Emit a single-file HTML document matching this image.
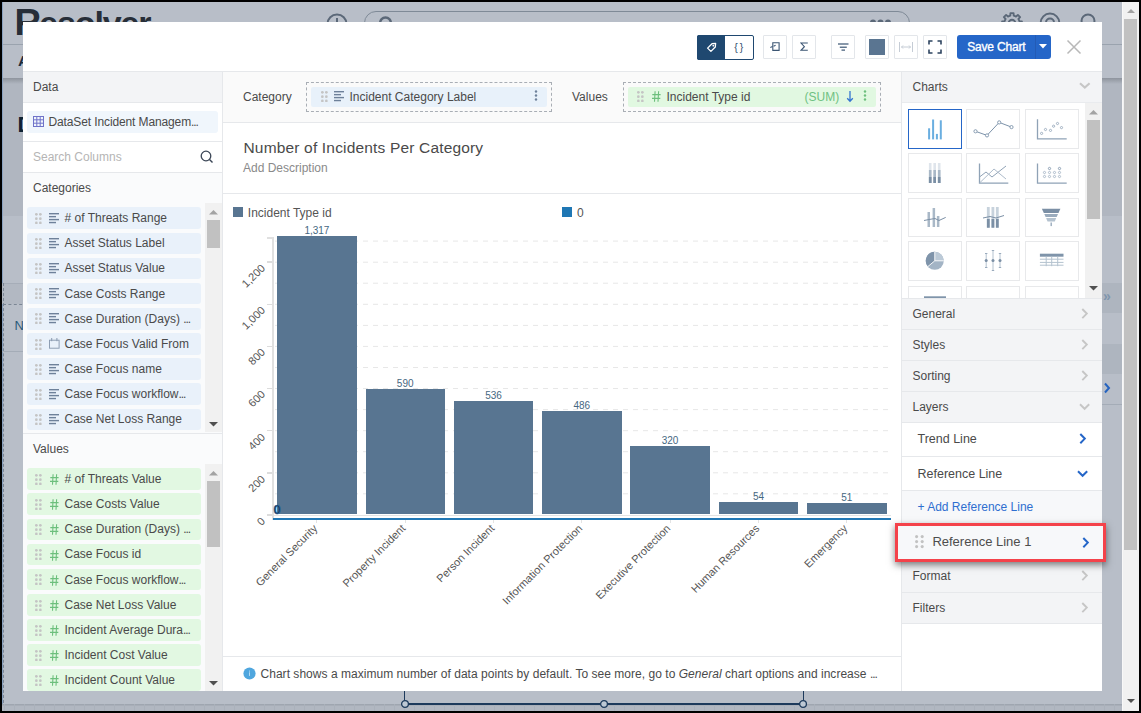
<!DOCTYPE html>
<html><head><meta charset="utf-8">
<style>
*{box-sizing:border-box;margin:0;padding:0}
html,body{width:1141px;height:713px;overflow:hidden;background:#000}
body{position:relative;font-family:"Liberation Sans",sans-serif;color:#444}
.abs{position:absolute}
#app{position:absolute;left:2px;top:2px;width:1120px;height:709px;background:#b8bec8;overflow:hidden}
#vscroll{position:absolute;left:1122px;top:2px;width:17px;height:709px;background:#f1f1f1;border-left:1px solid #f8f8f8}
#modal{position:absolute;left:23px;top:22px;width:1079px;height:669px;background:#fff;overflow:hidden}
.t{position:absolute;white-space:nowrap;font-size:12px;line-height:14px}
</style></head>
<body>
<div id="app">
<div class="abs" style="left:0.0px;top:76.0px;width:1120.0px;height:138.0px;background:#b0b6c0"></div>
<div class="abs" style="left:0.0px;top:76.0px;width:1120.0px;height:6.0px;background:linear-gradient(#8e949d,#b0b6c0)"></div>
<div class="abs" style="left:0.0px;top:0.0px;width:1120.0px;height:76.0px;background:#b8bec8"></div>
<div class="abs" style="left:0.0px;top:42.0px;width:1120.0px;height:1.0px;background:#9aa3ae"></div>
<div class="abs" style="left:0.0px;top:0.0px;width:1.0px;height:709.0px;background:#8aa2c0"></div>
<div class="abs" style="left:12.6px;top:-1px;font-size:37px;font-weight:bold;color:#272e38;letter-spacing:-2px;line-height:44px;white-space:nowrap">R<span style="font-size:34px;letter-spacing:-1.15px">esolver</span></div>
<div class="t" style="left:16.0px;top:51.9px;font-size:15.5px;color:#1c2b3d;font-weight:bold">A</div>
<div class="t" style="left:15.5px;top:115.7px;font-size:22px;color:#0f2233;font-weight:bold">D</div>
<div class="t" style="left:12.5px;top:317.2px;font-size:13px;color:#2a5a7a;">N</div>
<svg class="abs" style="left:324px;top:10px;" width="26" height="26" viewBox="0 0 26 26"><circle cx="11" cy="12" r="9.5" fill="none" stroke="#5b6878" stroke-width="2"/><path d="M11 6 V12" stroke="#5b6878" stroke-width="2"/></svg>
<div class="abs" style="left:362.0px;top:9.0px;width:546.0px;height:30.0px;border:1.5px solid #7f8a97;border-radius:12px"></div>
<svg class="abs" style="left:374px;top:12px;" width="20" height="20" viewBox="0 0 20 20"><circle cx="9.5" cy="9" r="5.5" fill="none" stroke="#5b6878" stroke-width="2.5"/></svg>
<svg class="abs" style="left:866px;top:15px;" width="28" height="10" viewBox="0 0 28 10"><circle cx="5" cy="5.5" r="3" fill="#5b6878"/><circle cx="12.5" cy="5.5" r="3" fill="#5b6878"/><circle cx="20" cy="5.5" r="3" fill="#5b6878"/></svg>
<svg class="abs" style="left:996.7px;top:8px;" width="26" height="26" viewBox="0 0 26 26"><path d="M10.09 5.98 L11.29 5.59 L11.44 3.12 L14.56 3.12 L14.71 5.59 L15.91 5.98 L17.03 6.55 L18.88 4.91 L21.09 7.12 L19.45 8.97 L20.02 10.09 L20.41 11.29 L22.88 11.44 L22.88 14.56 L20.41 14.71 L20.02 15.91 L19.45 17.03 L21.09 18.88 L18.88 21.09 L17.03 19.45 L15.91 20.02 L14.71 20.41 L14.56 22.88 L11.44 22.88 L11.29 20.41 L10.09 20.02 L8.97 19.45 L7.12 21.09 L4.91 18.88 L6.55 17.03 L5.98 15.91 L5.59 14.71 L3.12 14.56 L3.12 11.44 L5.59 11.29 L5.98 10.09 L6.55 8.97 L4.91 7.12 L7.12 4.91 L8.97 6.55 Z" fill="none" stroke="#5b6878" stroke-width="1.9" stroke-linejoin="round"/><circle cx="13" cy="13" r="3.2" fill="none" stroke="#5b6878" stroke-width="2"/></svg>
<svg class="abs" style="left:1034.6px;top:8.4px;" width="26" height="26" viewBox="0 0 26 26"><circle cx="13" cy="13" r="9.4" fill="none" stroke="#5b6878" stroke-width="2"/><circle cx="13" cy="12.6" r="4" fill="none" stroke="#5b6878" stroke-width="2"/></svg>
<svg class="abs" style="left:1073.4px;top:5.5px;" width="26" height="26" viewBox="0 0 26 26"><circle cx="13" cy="13" r="6.5" fill="none" stroke="#5b6878" stroke-width="2"/></svg>
<div class="abs" style="left:0.0px;top:281.0px;width:22.0px;height:21.0px;background:#b2b8c2;border-top:1px solid #a6adb8"></div>
<div class="abs" style="left:1px;top:281px;width:30px;height:430px;border-left:1px dashed #7b8694"></div>
<div class="abs" style="left:1px;top:302px;width:30px;height:1px;border-top:1px dashed #7b8694"></div>
<div class="abs" style="left:0.0px;top:348.5px;width:21.0px;height:1.0px;background:#a4acb7"></div>
<div class="abs" style="left:1100.0px;top:281.0px;width:20.0px;height:30.0px;background:#aeb5bf"></div>
<div class="t" style="left:1101.0px;top:287.1px;font-size:14px;color:#7f95ad;font-weight:bold">&raquo;</div>
<div class="abs" style="left:1100.0px;top:342.0px;width:20.0px;height:30.0px;background:#aeb5bf"></div>
<svg class="abs" style="left:1101px;top:380px;" width="8" height="12" viewBox="0 0 8 12"><path d="M2 1.5 L6 6 L2 10.5" fill="none" stroke="#2563c0" stroke-width="2"/></svg>
<div class="abs" style="left:1100.0px;top:401.5px;width:20.0px;height:1.0px;background:#a4acb7"></div>
<div class="abs" style="left:0.0px;top:702.0px;width:1120.0px;height:7.0px;background:#b1b7c1"></div>
<svg class="abs" style="left:0px;top:701.5px;" width="1120" height="8" viewBox="0 0 1120 8"><rect x="0" y="0" width="1120" height="1.5" fill="#9fa6b0"/><rect x="0" y="7" width="1120" height="1" fill="#bcc3cc"/><rect x="2" y="0" width="1" height="7" fill="#aab1bb"/><rect x="12" y="0" width="1" height="7" fill="#aab1bb"/><rect x="22" y="0" width="1" height="7" fill="#aab1bb"/><rect x="32" y="0" width="1" height="7" fill="#aab1bb"/><rect x="42" y="0" width="1" height="7" fill="#aab1bb"/><rect x="52" y="0" width="1" height="7" fill="#aab1bb"/><rect x="62" y="0" width="1" height="7" fill="#aab1bb"/><rect x="72" y="0" width="1" height="7" fill="#aab1bb"/><rect x="82" y="0" width="1" height="7" fill="#aab1bb"/><rect x="92" y="0" width="1" height="7" fill="#aab1bb"/><rect x="102" y="0" width="1" height="7" fill="#aab1bb"/><rect x="112" y="0" width="1" height="7" fill="#aab1bb"/><rect x="122" y="0" width="1" height="7" fill="#aab1bb"/><rect x="132" y="0" width="1" height="7" fill="#aab1bb"/><rect x="142" y="0" width="1" height="7" fill="#aab1bb"/><rect x="152" y="0" width="1" height="7" fill="#aab1bb"/><rect x="162" y="0" width="1" height="7" fill="#aab1bb"/><rect x="172" y="0" width="1" height="7" fill="#aab1bb"/><rect x="182" y="0" width="1" height="7" fill="#aab1bb"/><rect x="192" y="0" width="1" height="7" fill="#aab1bb"/><rect x="202" y="0" width="1" height="7" fill="#aab1bb"/><rect x="212" y="0" width="1" height="7" fill="#aab1bb"/><rect x="222" y="0" width="1" height="7" fill="#aab1bb"/><rect x="232" y="0" width="1" height="7" fill="#aab1bb"/><rect x="242" y="0" width="1" height="7" fill="#aab1bb"/><rect x="252" y="0" width="1" height="7" fill="#aab1bb"/><rect x="262" y="0" width="1" height="7" fill="#aab1bb"/><rect x="272" y="0" width="1" height="7" fill="#aab1bb"/><rect x="282" y="0" width="1" height="7" fill="#aab1bb"/><rect x="292" y="0" width="1" height="7" fill="#aab1bb"/><rect x="302" y="0" width="1" height="7" fill="#aab1bb"/><rect x="312" y="0" width="1" height="7" fill="#aab1bb"/><rect x="322" y="0" width="1" height="7" fill="#aab1bb"/><rect x="332" y="0" width="1" height="7" fill="#aab1bb"/><rect x="342" y="0" width="1" height="7" fill="#aab1bb"/><rect x="352" y="0" width="1" height="7" fill="#aab1bb"/><rect x="362" y="0" width="1" height="7" fill="#aab1bb"/><rect x="372" y="0" width="1" height="7" fill="#aab1bb"/><rect x="382" y="0" width="1" height="7" fill="#aab1bb"/><rect x="392" y="0" width="1" height="7" fill="#aab1bb"/><rect x="402" y="0" width="1" height="7" fill="#aab1bb"/><rect x="412" y="0" width="1" height="7" fill="#aab1bb"/><rect x="422" y="0" width="1" height="7" fill="#aab1bb"/><rect x="432" y="0" width="1" height="7" fill="#aab1bb"/><rect x="442" y="0" width="1" height="7" fill="#aab1bb"/><rect x="452" y="0" width="1" height="7" fill="#aab1bb"/><rect x="462" y="0" width="1" height="7" fill="#aab1bb"/><rect x="472" y="0" width="1" height="7" fill="#aab1bb"/><rect x="482" y="0" width="1" height="7" fill="#aab1bb"/><rect x="492" y="0" width="1" height="7" fill="#aab1bb"/><rect x="502" y="0" width="1" height="7" fill="#aab1bb"/><rect x="512" y="0" width="1" height="7" fill="#aab1bb"/><rect x="522" y="0" width="1" height="7" fill="#aab1bb"/><rect x="532" y="0" width="1" height="7" fill="#aab1bb"/><rect x="542" y="0" width="1" height="7" fill="#aab1bb"/><rect x="552" y="0" width="1" height="7" fill="#aab1bb"/><rect x="562" y="0" width="1" height="7" fill="#aab1bb"/><rect x="572" y="0" width="1" height="7" fill="#aab1bb"/><rect x="582" y="0" width="1" height="7" fill="#aab1bb"/><rect x="592" y="0" width="1" height="7" fill="#aab1bb"/><rect x="602" y="0" width="1" height="7" fill="#aab1bb"/><rect x="612" y="0" width="1" height="7" fill="#aab1bb"/><rect x="622" y="0" width="1" height="7" fill="#aab1bb"/><rect x="632" y="0" width="1" height="7" fill="#aab1bb"/><rect x="642" y="0" width="1" height="7" fill="#aab1bb"/><rect x="652" y="0" width="1" height="7" fill="#aab1bb"/><rect x="662" y="0" width="1" height="7" fill="#aab1bb"/><rect x="672" y="0" width="1" height="7" fill="#aab1bb"/><rect x="682" y="0" width="1" height="7" fill="#aab1bb"/><rect x="692" y="0" width="1" height="7" fill="#aab1bb"/><rect x="702" y="0" width="1" height="7" fill="#aab1bb"/><rect x="712" y="0" width="1" height="7" fill="#aab1bb"/><rect x="722" y="0" width="1" height="7" fill="#aab1bb"/><rect x="732" y="0" width="1" height="7" fill="#aab1bb"/><rect x="742" y="0" width="1" height="7" fill="#aab1bb"/><rect x="752" y="0" width="1" height="7" fill="#aab1bb"/><rect x="762" y="0" width="1" height="7" fill="#aab1bb"/><rect x="772" y="0" width="1" height="7" fill="#aab1bb"/><rect x="782" y="0" width="1" height="7" fill="#aab1bb"/><rect x="792" y="0" width="1" height="7" fill="#aab1bb"/><rect x="802" y="0" width="1" height="7" fill="#aab1bb"/><rect x="812" y="0" width="1" height="7" fill="#aab1bb"/><rect x="822" y="0" width="1" height="7" fill="#aab1bb"/><rect x="832" y="0" width="1" height="7" fill="#aab1bb"/><rect x="842" y="0" width="1" height="7" fill="#aab1bb"/><rect x="852" y="0" width="1" height="7" fill="#aab1bb"/><rect x="862" y="0" width="1" height="7" fill="#aab1bb"/><rect x="872" y="0" width="1" height="7" fill="#aab1bb"/><rect x="882" y="0" width="1" height="7" fill="#aab1bb"/><rect x="892" y="0" width="1" height="7" fill="#aab1bb"/><rect x="902" y="0" width="1" height="7" fill="#aab1bb"/><rect x="912" y="0" width="1" height="7" fill="#aab1bb"/><rect x="922" y="0" width="1" height="7" fill="#aab1bb"/><rect x="932" y="0" width="1" height="7" fill="#aab1bb"/><rect x="942" y="0" width="1" height="7" fill="#aab1bb"/><rect x="952" y="0" width="1" height="7" fill="#aab1bb"/><rect x="962" y="0" width="1" height="7" fill="#aab1bb"/><rect x="972" y="0" width="1" height="7" fill="#aab1bb"/><rect x="982" y="0" width="1" height="7" fill="#aab1bb"/><rect x="992" y="0" width="1" height="7" fill="#aab1bb"/><rect x="1002" y="0" width="1" height="7" fill="#aab1bb"/><rect x="1012" y="0" width="1" height="7" fill="#aab1bb"/><rect x="1022" y="0" width="1" height="7" fill="#aab1bb"/><rect x="1032" y="0" width="1" height="7" fill="#aab1bb"/><rect x="1042" y="0" width="1" height="7" fill="#aab1bb"/><rect x="1052" y="0" width="1" height="7" fill="#aab1bb"/><rect x="1062" y="0" width="1" height="7" fill="#aab1bb"/><rect x="1072" y="0" width="1" height="7" fill="#aab1bb"/><rect x="1082" y="0" width="1" height="7" fill="#aab1bb"/><rect x="1092" y="0" width="1" height="7" fill="#aab1bb"/><rect x="1102" y="0" width="1" height="7" fill="#aab1bb"/><rect x="1112" y="0" width="1" height="7" fill="#aab1bb"/></svg>
<div class="abs" style="left:402.0px;top:689.0px;width:1.3px;height:10.0px;background:#1d3a5c"></div>
<div class="abs" style="left:801.0px;top:689.0px;width:1.3px;height:10.0px;background:#1d3a5c"></div>
<div class="abs" style="left:405.0px;top:701.4px;width:396.0px;height:1.3px;background:#1d3a5c"></div>
<svg class="abs" style="left:397.9px;top:697px;" width="10" height="10" viewBox="0 0 10 10"><circle cx="5" cy="5" r="3.4" fill="#bdc8d4" stroke="#1d3a5c" stroke-width="1.3"/></svg>
<svg class="abs" style="left:596.8px;top:697px;" width="10" height="10" viewBox="0 0 10 10"><circle cx="5" cy="5" r="3.4" fill="#bdc8d4" stroke="#1d3a5c" stroke-width="1.3"/></svg>
<svg class="abs" style="left:795.9px;top:697px;" width="10" height="10" viewBox="0 0 10 10"><circle cx="5" cy="5" r="3.4" fill="#bdc8d4" stroke="#1d3a5c" stroke-width="1.3"/></svg>
</div>
<div id="vscroll">
  <div class="abs" style="left:4px;top:7px;width:0;height:0;border-left:4px solid transparent;border-right:4px solid transparent;border-bottom:4px solid #a3a3a3"></div>
  <div class="abs" style="left:1px;top:17px;width:13px;height:531px;background:#c1c1c1"></div>
  <div class="abs" style="left:4px;top:697px;width:0;height:0;border-left:4px solid transparent;border-right:4px solid transparent;border-top:4px solid #505050"></div>
</div>
<div id="modal">
<div class="abs" style="left:0.0px;top:49.0px;width:1079.0px;height:1.0px;background:#e6e8eb"></div>
<div class="abs" style="left:674.0px;top:13.0px;width:57.0px;height:25.0px;border:1px solid #1f4870;border-radius:2px;background:#fff"></div>
<div class="abs" style="left:674.0px;top:13.0px;width:28.0px;height:25.0px;background:#1f4870;border-radius:2px 0 0 2px"></div>
<svg class="abs" style="left:682px;top:19px;" width="13" height="13" viewBox="0 0 13 13"><path d="M2.6 7.1 L7.0 2.7 L10.6 2.4 L10.3 6.0 L5.9 10.4 Z" fill="none" stroke="#fff" stroke-width="1.3" stroke-linejoin="round"/><circle cx="8.3" cy="4.7" r="0.9" fill="#fff"/></svg>
<div class="t" style="left:711.3px;top:18.1px;font-size:10.5px;color:#34506f;letter-spacing:-0.5px">{ }</div>
<div class="abs" style="left:740.0px;top:13.0px;width:24.0px;height:24.0px;border:1px solid #e3e6ea;border-radius:1px;background:#fff"></div>
<div class="abs" style="left:769.0px;top:13.0px;width:24.0px;height:24.0px;border:1px solid #e3e6ea;border-radius:1px;background:#fff"></div>
<div class="abs" style="left:808.0px;top:13.0px;width:24.0px;height:24.0px;border:1px solid #e3e6ea;border-radius:1px;background:#fff"></div>
<div class="abs" style="left:842.0px;top:13.0px;width:24.0px;height:24.0px;border:1px solid #e3e6ea;border-radius:1px;background:#fff"></div>
<div class="abs" style="left:871.0px;top:13.0px;width:24.0px;height:24.0px;border:1px solid #e3e6ea;border-radius:1px;background:#fff"></div>
<div class="abs" style="left:900.0px;top:13.0px;width:24.0px;height:24.0px;border:1px solid #e3e6ea;border-radius:1px;background:#fff"></div>
<svg class="abs" style="left:745px;top:18px;" width="14" height="14" viewBox="0 0 14 14"><path d="M4.8 2.8 H11.1 V10.4 H4.8 Z" fill="none" stroke="#3b5573" stroke-width="1.1"/><path d="M2.3 7.5 L4.5 6.6 M5.6 6.2 L7.6 5.3" fill="none" stroke="#3b5573" stroke-width="1.1"/></svg>
<svg class="abs" style="left:777px;top:20px;" width="9" height="10" viewBox="0 0 9 10"><path d="M7.8 1 H1 L4.4 4.7 L1 8.3 H7.8" fill="none" stroke="#3b5573" stroke-width="1.1" stroke-linejoin="miter"/></svg>
<svg class="abs" style="left:813px;top:19px;" width="14" height="12" viewBox="0 0 14 12"><rect x="2" y="2.4" width="10.5" height="1.2" fill="#3b5573"/><rect x="3.8" y="5.6" width="7" height="1.2" fill="#3b5573"/><rect x="5.5" y="8.5" width="3.5" height="1.2" fill="#3b5573"/></svg>
<div class="abs" style="left:846.0px;top:17.0px;width:16.0px;height:16.0px;background:#5a7591"></div>
<svg class="abs" style="left:875px;top:19px;" width="16" height="12" viewBox="0 0 16 12"><path d="M1.5 1 V11 M14.5 1 V11" stroke="#c5ccd5" stroke-width="1"/><path d="M3.5 6 H12.5 M5 4.5 L3.5 6 L5 7.5 M11 4.5 L12.5 6 L11 7.5" fill="none" stroke="#c5ccd5" stroke-width="1"/></svg>
<svg class="abs" style="left:905px;top:18px;" width="14" height="14" viewBox="0 0 14 14"><path d="M1 4.5 V1 H4.5 M9.5 1 H13 V4.5 M13 9.5 V13 H9.5 M4.5 13 H1 V9.5" fill="none" stroke="#2d4460" stroke-width="1.6"/></svg>
<div class="abs" style="left:934.0px;top:13.0px;width:94.0px;height:24.0px;background:#2566c8;border-radius:3px"></div>
<div class="abs" style="left:1012.0px;top:13.0px;width:1.0px;height:24.0px;background:#235bb5"></div>
<div class="t" style="left:944.3px;top:18.1px;font-size:12px;color:#fff;letter-spacing:-0.2px;-webkit-text-stroke:0.35px #fff">Save Chart</div>
<svg class="abs" style="left:1016px;top:22px;" width="8" height="5" viewBox="0 0 8 5"><path d="M0 0 H8 L4 4.5 Z" fill="#fff"/></svg>
<svg class="abs" style="left:1043px;top:17px;" width="16" height="16" viewBox="0 0 16 16"><path d="M1.5 1.5 L14.5 14.5 M14.5 1.5 L1.5 14.5" stroke="#b8b8b8" stroke-width="1.5"/></svg>
<div class="abs" style="left:0.0px;top:50.0px;width:199.0px;height:619.0px;background:#fafbfc"></div>
<div class="abs" style="left:199.0px;top:50.0px;width:1.0px;height:619.0px;background:#e6e8eb"></div>
<div class="abs" style="left:0.0px;top:50.0px;width:199.0px;height:30.0px;background:#f3f4f6"></div>
<div class="abs" style="left:0.0px;top:80.0px;width:199.0px;height:1.0px;background:#e6e8eb"></div>
<div class="abs" style="left:0.0px;top:81.0px;width:199.0px;height:38.0px;background:#fff"></div>
<div class="abs" style="left:4.0px;top:89.0px;width:191.0px;height:22.0px;background:#f0f6fc;border-radius:3px"></div>
<div class="t" style="left:10.0px;top:57.8px;font-size:12px;color:#4a4a4a;">Data</div>
<svg class="abs" style="left:10px;top:94px;" width="11" height="11" viewBox="0 0 11 11"><rect x="0.5" y="0.5" width="10" height="10" fill="none" stroke="#6f73c9" stroke-width="1"/><path d="M0.5 3.8 H10.5 M0.5 7.2 H10.5 M3.8 0.5 V10.5 M7.2 0.5 V10.5" stroke="#6f73c9" stroke-width="1"/></svg>
<div class="t" style="left:25.5px;top:92.8px;font-size:12px;color:#4a4a4a;letter-spacing:-0.12px">DataSet Incident Managem<span style="letter-spacing:-1.1px">...</span></div>
<div class="abs" style="left:0.0px;top:119.0px;width:199.0px;height:1.0px;background:#e6e8eb"></div>
<div class="abs" style="left:0.0px;top:120.0px;width:199.0px;height:30.0px;background:#fff"></div>
<div class="t" style="left:10.0px;top:127.8px;font-size:12px;color:#b5b5b5;">Search Columns</div>
<svg class="abs" style="left:177px;top:128px;" width="14" height="14" viewBox="0 0 14 14"><circle cx="6" cy="6" r="4.8" fill="none" stroke="#3b4656" stroke-width="1.3"/><path d="M9.5 9.5 L12.5 12.5" stroke="#3b4656" stroke-width="1.4"/></svg>
<div class="abs" style="left:0.0px;top:150.0px;width:199.0px;height:1.0px;background:#e6e8eb"></div>
<div class="t" style="left:10.0px;top:158.8px;font-size:12px;color:#4a4a4a;">Categories</div>
<div class="abs" style="left:0;top:0;width:182px;height:410px;overflow:hidden"><div class="abs" style="left:4.0px;top:185.4px;width:174.0px;height:21.6px;background:#e9f1fa;border-radius:3px"></div><svg class="abs" style="left:12px;top:190.9px;" width="7" height="11" viewBox="0 0 7 11"><circle cx="1.35" cy="1.35" r="1.35" fill="#c4c4c4"/><circle cx="1.35" cy="5.65" r="1.35" fill="#c4c4c4"/><circle cx="1.35" cy="9.95" r="1.35" fill="#c4c4c4"/><circle cx="5.35" cy="1.35" r="1.35" fill="#c4c4c4"/><circle cx="5.35" cy="5.65" r="1.35" fill="#c4c4c4"/><circle cx="5.35" cy="9.95" r="1.35" fill="#c4c4c4"/></svg><svg class="abs" style="left:26px;top:190.8px;" width="10" height="11" viewBox="0 0 10 11"><rect x="0" y="0.00" width="10" height="1.4" fill="#6e819a"/><rect x="0" y="2.95" width="7" height="1.4" fill="#6e819a"/><rect x="0" y="5.90" width="10" height="1.4" fill="#6e819a"/><rect x="0" y="8.85" width="7" height="1.4" fill="#6e819a"/></svg><div class="t" style="left:41.5px;top:189.0px;font-size:12px;color:#4a4a4a;"># of Threats Range</div><div class="abs" style="left:4.0px;top:210.5px;width:174.0px;height:21.6px;background:#e9f1fa;border-radius:3px"></div><svg class="abs" style="left:12px;top:216.04000000000002px;" width="7" height="11" viewBox="0 0 7 11"><circle cx="1.35" cy="1.35" r="1.35" fill="#c4c4c4"/><circle cx="1.35" cy="5.65" r="1.35" fill="#c4c4c4"/><circle cx="1.35" cy="9.95" r="1.35" fill="#c4c4c4"/><circle cx="5.35" cy="1.35" r="1.35" fill="#c4c4c4"/><circle cx="5.35" cy="5.65" r="1.35" fill="#c4c4c4"/><circle cx="5.35" cy="9.95" r="1.35" fill="#c4c4c4"/></svg><svg class="abs" style="left:26px;top:215.94000000000003px;" width="10" height="11" viewBox="0 0 10 11"><rect x="0" y="0.00" width="10" height="1.4" fill="#6e819a"/><rect x="0" y="2.95" width="7" height="1.4" fill="#6e819a"/><rect x="0" y="5.90" width="10" height="1.4" fill="#6e819a"/><rect x="0" y="8.85" width="7" height="1.4" fill="#6e819a"/></svg><div class="t" style="left:41.5px;top:214.2px;font-size:12px;color:#4a4a4a;">Asset Status Label</div><div class="abs" style="left:4.0px;top:235.7px;width:174.0px;height:21.6px;background:#e9f1fa;border-radius:3px"></div><svg class="abs" style="left:12px;top:241.18px;" width="7" height="11" viewBox="0 0 7 11"><circle cx="1.35" cy="1.35" r="1.35" fill="#c4c4c4"/><circle cx="1.35" cy="5.65" r="1.35" fill="#c4c4c4"/><circle cx="1.35" cy="9.95" r="1.35" fill="#c4c4c4"/><circle cx="5.35" cy="1.35" r="1.35" fill="#c4c4c4"/><circle cx="5.35" cy="5.65" r="1.35" fill="#c4c4c4"/><circle cx="5.35" cy="9.95" r="1.35" fill="#c4c4c4"/></svg><svg class="abs" style="left:26px;top:241.08px;" width="10" height="11" viewBox="0 0 10 11"><rect x="0" y="0.00" width="10" height="1.4" fill="#6e819a"/><rect x="0" y="2.95" width="7" height="1.4" fill="#6e819a"/><rect x="0" y="5.90" width="10" height="1.4" fill="#6e819a"/><rect x="0" y="8.85" width="7" height="1.4" fill="#6e819a"/></svg><div class="t" style="left:41.5px;top:239.3px;font-size:12px;color:#4a4a4a;">Asset Status Value</div><div class="abs" style="left:4.0px;top:260.8px;width:174.0px;height:21.6px;background:#e9f1fa;border-radius:3px"></div><svg class="abs" style="left:12px;top:266.32px;" width="7" height="11" viewBox="0 0 7 11"><circle cx="1.35" cy="1.35" r="1.35" fill="#c4c4c4"/><circle cx="1.35" cy="5.65" r="1.35" fill="#c4c4c4"/><circle cx="1.35" cy="9.95" r="1.35" fill="#c4c4c4"/><circle cx="5.35" cy="1.35" r="1.35" fill="#c4c4c4"/><circle cx="5.35" cy="5.65" r="1.35" fill="#c4c4c4"/><circle cx="5.35" cy="9.95" r="1.35" fill="#c4c4c4"/></svg><svg class="abs" style="left:26px;top:266.21999999999997px;" width="10" height="11" viewBox="0 0 10 11"><rect x="0" y="0.00" width="10" height="1.4" fill="#6e819a"/><rect x="0" y="2.95" width="7" height="1.4" fill="#6e819a"/><rect x="0" y="5.90" width="10" height="1.4" fill="#6e819a"/><rect x="0" y="8.85" width="7" height="1.4" fill="#6e819a"/></svg><div class="t" style="left:41.5px;top:264.5px;font-size:12px;color:#4a4a4a;">Case Costs Range</div><div class="abs" style="left:4.0px;top:286.0px;width:174.0px;height:21.6px;background:#e9f1fa;border-radius:3px"></div><svg class="abs" style="left:12px;top:291.46000000000004px;" width="7" height="11" viewBox="0 0 7 11"><circle cx="1.35" cy="1.35" r="1.35" fill="#c4c4c4"/><circle cx="1.35" cy="5.65" r="1.35" fill="#c4c4c4"/><circle cx="1.35" cy="9.95" r="1.35" fill="#c4c4c4"/><circle cx="5.35" cy="1.35" r="1.35" fill="#c4c4c4"/><circle cx="5.35" cy="5.65" r="1.35" fill="#c4c4c4"/><circle cx="5.35" cy="9.95" r="1.35" fill="#c4c4c4"/></svg><svg class="abs" style="left:26px;top:291.36px;" width="10" height="11" viewBox="0 0 10 11"><rect x="0" y="0.00" width="10" height="1.4" fill="#6e819a"/><rect x="0" y="2.95" width="7" height="1.4" fill="#6e819a"/><rect x="0" y="5.90" width="10" height="1.4" fill="#6e819a"/><rect x="0" y="8.85" width="7" height="1.4" fill="#6e819a"/></svg><div class="t" style="left:41.5px;top:289.6px;font-size:12px;color:#4a4a4a;">Case Duration (Days) <span style="letter-spacing:-1.1px">...</span></div><div class="abs" style="left:4.0px;top:311.1px;width:174.0px;height:21.6px;background:#e9f1fa;border-radius:3px"></div><svg class="abs" style="left:12px;top:316.6px;" width="7" height="11" viewBox="0 0 7 11"><circle cx="1.35" cy="1.35" r="1.35" fill="#c4c4c4"/><circle cx="1.35" cy="5.65" r="1.35" fill="#c4c4c4"/><circle cx="1.35" cy="9.95" r="1.35" fill="#c4c4c4"/><circle cx="5.35" cy="1.35" r="1.35" fill="#c4c4c4"/><circle cx="5.35" cy="5.65" r="1.35" fill="#c4c4c4"/><circle cx="5.35" cy="9.95" r="1.35" fill="#c4c4c4"/></svg><svg class="abs" style="left:25.6px;top:315.70000000000005px;" width="11" height="11" viewBox="0 0 11 11"><rect x="0.5" y="2.2" width="9.6" height="8" fill="none" stroke="#8a9ab0" stroke-width="0.95"/><rect x="2.2" y="0" width="1" height="3.2" fill="#8a9ab0"/><rect x="7.4" y="0" width="1" height="3.2" fill="#8a9ab0"/></svg><div class="t" style="left:41.5px;top:314.7px;font-size:12px;color:#4a4a4a;">Case Focus Valid From</div><div class="abs" style="left:4.0px;top:336.2px;width:174.0px;height:21.6px;background:#e9f1fa;border-radius:3px"></div><svg class="abs" style="left:12px;top:341.74px;" width="7" height="11" viewBox="0 0 7 11"><circle cx="1.35" cy="1.35" r="1.35" fill="#c4c4c4"/><circle cx="1.35" cy="5.65" r="1.35" fill="#c4c4c4"/><circle cx="1.35" cy="9.95" r="1.35" fill="#c4c4c4"/><circle cx="5.35" cy="1.35" r="1.35" fill="#c4c4c4"/><circle cx="5.35" cy="5.65" r="1.35" fill="#c4c4c4"/><circle cx="5.35" cy="9.95" r="1.35" fill="#c4c4c4"/></svg><svg class="abs" style="left:26px;top:341.64px;" width="10" height="11" viewBox="0 0 10 11"><rect x="0" y="0.00" width="10" height="1.4" fill="#6e819a"/><rect x="0" y="2.95" width="7" height="1.4" fill="#6e819a"/><rect x="0" y="5.90" width="10" height="1.4" fill="#6e819a"/><rect x="0" y="8.85" width="7" height="1.4" fill="#6e819a"/></svg><div class="t" style="left:41.5px;top:339.9px;font-size:12px;color:#4a4a4a;">Case Focus name</div><div class="abs" style="left:4.0px;top:361.4px;width:174.0px;height:21.6px;background:#e9f1fa;border-radius:3px"></div><svg class="abs" style="left:12px;top:366.88px;" width="7" height="11" viewBox="0 0 7 11"><circle cx="1.35" cy="1.35" r="1.35" fill="#c4c4c4"/><circle cx="1.35" cy="5.65" r="1.35" fill="#c4c4c4"/><circle cx="1.35" cy="9.95" r="1.35" fill="#c4c4c4"/><circle cx="5.35" cy="1.35" r="1.35" fill="#c4c4c4"/><circle cx="5.35" cy="5.65" r="1.35" fill="#c4c4c4"/><circle cx="5.35" cy="9.95" r="1.35" fill="#c4c4c4"/></svg><svg class="abs" style="left:26px;top:366.78px;" width="10" height="11" viewBox="0 0 10 11"><rect x="0" y="0.00" width="10" height="1.4" fill="#6e819a"/><rect x="0" y="2.95" width="7" height="1.4" fill="#6e819a"/><rect x="0" y="5.90" width="10" height="1.4" fill="#6e819a"/><rect x="0" y="8.85" width="7" height="1.4" fill="#6e819a"/></svg><div class="t" style="left:41.5px;top:365.0px;font-size:12px;color:#4a4a4a;">Case Focus workflow<span style="letter-spacing:-1.1px">...</span></div><div class="abs" style="left:4.0px;top:386.5px;width:174.0px;height:21.6px;background:#e9f1fa;border-radius:3px"></div><svg class="abs" style="left:12px;top:392.02px;" width="7" height="11" viewBox="0 0 7 11"><circle cx="1.35" cy="1.35" r="1.35" fill="#c4c4c4"/><circle cx="1.35" cy="5.65" r="1.35" fill="#c4c4c4"/><circle cx="1.35" cy="9.95" r="1.35" fill="#c4c4c4"/><circle cx="5.35" cy="1.35" r="1.35" fill="#c4c4c4"/><circle cx="5.35" cy="5.65" r="1.35" fill="#c4c4c4"/><circle cx="5.35" cy="9.95" r="1.35" fill="#c4c4c4"/></svg><svg class="abs" style="left:26px;top:391.91999999999996px;" width="10" height="11" viewBox="0 0 10 11"><rect x="0" y="0.00" width="10" height="1.4" fill="#6e819a"/><rect x="0" y="2.95" width="7" height="1.4" fill="#6e819a"/><rect x="0" y="5.90" width="10" height="1.4" fill="#6e819a"/><rect x="0" y="8.85" width="7" height="1.4" fill="#6e819a"/></svg><div class="t" style="left:41.5px;top:390.2px;font-size:12px;color:#4a4a4a;">Case Net Loss Range</div><div class="abs" style="left:4.0px;top:411.7px;width:174.0px;height:21.6px;background:#e9f1fa;border-radius:3px"></div><svg class="abs" style="left:12px;top:417.15999999999997px;" width="7" height="11" viewBox="0 0 7 11"><circle cx="1.35" cy="1.35" r="1.35" fill="#c4c4c4"/><circle cx="1.35" cy="5.65" r="1.35" fill="#c4c4c4"/><circle cx="1.35" cy="9.95" r="1.35" fill="#c4c4c4"/><circle cx="5.35" cy="1.35" r="1.35" fill="#c4c4c4"/><circle cx="5.35" cy="5.65" r="1.35" fill="#c4c4c4"/><circle cx="5.35" cy="9.95" r="1.35" fill="#c4c4c4"/></svg><svg class="abs" style="left:26px;top:417.05999999999995px;" width="10" height="11" viewBox="0 0 10 11"><rect x="0" y="0.00" width="10" height="1.4" fill="#6e819a"/><rect x="0" y="2.95" width="7" height="1.4" fill="#6e819a"/><rect x="0" y="5.90" width="10" height="1.4" fill="#6e819a"/><rect x="0" y="8.85" width="7" height="1.4" fill="#6e819a"/></svg><div class="t" style="left:41.5px;top:415.3px;font-size:12px;color:#4a4a4a;">Case Net Loss Value</div></div>
<div class="abs" style="left:182.0px;top:181.0px;width:17.0px;height:229.0px;background:#f1f1f1"></div>
<svg class="abs" style="left:186px;top:188px;" width="9" height="5" viewBox="0 0 9 5"><path d="M0 4.5 L4.5 0 L9 4.5 Z" fill="#a3a3a3"/></svg>
<div class="abs" style="left:184.0px;top:197.5px;width:13.0px;height:28.0px;background:#c1c1c1"></div>
<svg class="abs" style="left:186px;top:400px;" width="9" height="5" viewBox="0 0 9 5"><path d="M0 0 L4.5 4.5 L9 0 Z" fill="#505050"/></svg>
<div class="abs" style="left:0.0px;top:411.0px;width:199.0px;height:1.0px;background:#e6e8eb"></div>
<div class="t" style="left:10.0px;top:420.3px;font-size:12px;color:#4a4a4a;">Values</div>
<div class="abs" style="left:0;top:0;width:182px;height:669px;overflow:hidden"><div class="abs" style="left:4.0px;top:446.3px;width:174.0px;height:21.6px;background:#e2f8e2;border-radius:3px"></div><svg class="abs" style="left:12px;top:451.8px;" width="7" height="11" viewBox="0 0 7 11"><circle cx="1.35" cy="1.35" r="1.35" fill="#c4c4c4"/><circle cx="1.35" cy="5.65" r="1.35" fill="#c4c4c4"/><circle cx="1.35" cy="9.95" r="1.35" fill="#c4c4c4"/><circle cx="5.35" cy="1.35" r="1.35" fill="#c4c4c4"/><circle cx="5.35" cy="5.65" r="1.35" fill="#c4c4c4"/><circle cx="5.35" cy="9.95" r="1.35" fill="#c4c4c4"/></svg><svg class="abs" style="left:26.8px;top:452.1px;" width="9" height="11" viewBox="0 0 9 11"><path d="M3.1 0.3 L2.5 10.7 M6.6 0.3 L6.0 10.7 M0.3 3.6 H8.6 M0 7.4 H8.3" stroke="#6cbf7c" stroke-width="1.1" fill="none"/></svg><div class="t" style="left:41.5px;top:449.9px;font-size:12px;color:#4a4a4a;"># of Threats Value</div><div class="abs" style="left:4.0px;top:471.4px;width:174.0px;height:21.6px;background:#e2f8e2;border-radius:3px"></div><svg class="abs" style="left:12px;top:476.94px;" width="7" height="11" viewBox="0 0 7 11"><circle cx="1.35" cy="1.35" r="1.35" fill="#c4c4c4"/><circle cx="1.35" cy="5.65" r="1.35" fill="#c4c4c4"/><circle cx="1.35" cy="9.95" r="1.35" fill="#c4c4c4"/><circle cx="5.35" cy="1.35" r="1.35" fill="#c4c4c4"/><circle cx="5.35" cy="5.65" r="1.35" fill="#c4c4c4"/><circle cx="5.35" cy="9.95" r="1.35" fill="#c4c4c4"/></svg><svg class="abs" style="left:26.8px;top:477.24px;" width="9" height="11" viewBox="0 0 9 11"><path d="M3.1 0.3 L2.5 10.7 M6.6 0.3 L6.0 10.7 M0.3 3.6 H8.6 M0 7.4 H8.3" stroke="#6cbf7c" stroke-width="1.1" fill="none"/></svg><div class="t" style="left:41.5px;top:475.1px;font-size:12px;color:#4a4a4a;">Case Costs Value</div><div class="abs" style="left:4.0px;top:496.6px;width:174.0px;height:21.6px;background:#e2f8e2;border-radius:3px"></div><svg class="abs" style="left:12px;top:502.08000000000004px;" width="7" height="11" viewBox="0 0 7 11"><circle cx="1.35" cy="1.35" r="1.35" fill="#c4c4c4"/><circle cx="1.35" cy="5.65" r="1.35" fill="#c4c4c4"/><circle cx="1.35" cy="9.95" r="1.35" fill="#c4c4c4"/><circle cx="5.35" cy="1.35" r="1.35" fill="#c4c4c4"/><circle cx="5.35" cy="5.65" r="1.35" fill="#c4c4c4"/><circle cx="5.35" cy="9.95" r="1.35" fill="#c4c4c4"/></svg><svg class="abs" style="left:26.8px;top:502.38000000000005px;" width="9" height="11" viewBox="0 0 9 11"><path d="M3.1 0.3 L2.5 10.7 M6.6 0.3 L6.0 10.7 M0.3 3.6 H8.6 M0 7.4 H8.3" stroke="#6cbf7c" stroke-width="1.1" fill="none"/></svg><div class="t" style="left:41.5px;top:500.2px;font-size:12px;color:#4a4a4a;">Case Duration (Days) <span style="letter-spacing:-1.1px">...</span></div><div class="abs" style="left:4.0px;top:521.7px;width:174.0px;height:21.6px;background:#e2f8e2;border-radius:3px"></div><svg class="abs" style="left:12px;top:527.22px;" width="7" height="11" viewBox="0 0 7 11"><circle cx="1.35" cy="1.35" r="1.35" fill="#c4c4c4"/><circle cx="1.35" cy="5.65" r="1.35" fill="#c4c4c4"/><circle cx="1.35" cy="9.95" r="1.35" fill="#c4c4c4"/><circle cx="5.35" cy="1.35" r="1.35" fill="#c4c4c4"/><circle cx="5.35" cy="5.65" r="1.35" fill="#c4c4c4"/><circle cx="5.35" cy="9.95" r="1.35" fill="#c4c4c4"/></svg><svg class="abs" style="left:26.8px;top:527.52px;" width="9" height="11" viewBox="0 0 9 11"><path d="M3.1 0.3 L2.5 10.7 M6.6 0.3 L6.0 10.7 M0.3 3.6 H8.6 M0 7.4 H8.3" stroke="#6cbf7c" stroke-width="1.1" fill="none"/></svg><div class="t" style="left:41.5px;top:525.4px;font-size:12px;color:#4a4a4a;">Case Focus id</div><div class="abs" style="left:4.0px;top:546.9px;width:174.0px;height:21.6px;background:#e2f8e2;border-radius:3px"></div><svg class="abs" style="left:12px;top:552.36px;" width="7" height="11" viewBox="0 0 7 11"><circle cx="1.35" cy="1.35" r="1.35" fill="#c4c4c4"/><circle cx="1.35" cy="5.65" r="1.35" fill="#c4c4c4"/><circle cx="1.35" cy="9.95" r="1.35" fill="#c4c4c4"/><circle cx="5.35" cy="1.35" r="1.35" fill="#c4c4c4"/><circle cx="5.35" cy="5.65" r="1.35" fill="#c4c4c4"/><circle cx="5.35" cy="9.95" r="1.35" fill="#c4c4c4"/></svg><svg class="abs" style="left:26.8px;top:552.66px;" width="9" height="11" viewBox="0 0 9 11"><path d="M3.1 0.3 L2.5 10.7 M6.6 0.3 L6.0 10.7 M0.3 3.6 H8.6 M0 7.4 H8.3" stroke="#6cbf7c" stroke-width="1.1" fill="none"/></svg><div class="t" style="left:41.5px;top:550.5px;font-size:12px;color:#4a4a4a;">Case Focus workflow<span style="letter-spacing:-1.1px">...</span></div><div class="abs" style="left:4.0px;top:572.0px;width:174.0px;height:21.6px;background:#e2f8e2;border-radius:3px"></div><svg class="abs" style="left:12px;top:577.5px;" width="7" height="11" viewBox="0 0 7 11"><circle cx="1.35" cy="1.35" r="1.35" fill="#c4c4c4"/><circle cx="1.35" cy="5.65" r="1.35" fill="#c4c4c4"/><circle cx="1.35" cy="9.95" r="1.35" fill="#c4c4c4"/><circle cx="5.35" cy="1.35" r="1.35" fill="#c4c4c4"/><circle cx="5.35" cy="5.65" r="1.35" fill="#c4c4c4"/><circle cx="5.35" cy="9.95" r="1.35" fill="#c4c4c4"/></svg><svg class="abs" style="left:26.8px;top:577.8px;" width="9" height="11" viewBox="0 0 9 11"><path d="M3.1 0.3 L2.5 10.7 M6.6 0.3 L6.0 10.7 M0.3 3.6 H8.6 M0 7.4 H8.3" stroke="#6cbf7c" stroke-width="1.1" fill="none"/></svg><div class="t" style="left:41.5px;top:575.6px;font-size:12px;color:#4a4a4a;">Case Net Loss Value</div><div class="abs" style="left:4.0px;top:597.1px;width:174.0px;height:21.6px;background:#e2f8e2;border-radius:3px"></div><svg class="abs" style="left:12px;top:602.64px;" width="7" height="11" viewBox="0 0 7 11"><circle cx="1.35" cy="1.35" r="1.35" fill="#c4c4c4"/><circle cx="1.35" cy="5.65" r="1.35" fill="#c4c4c4"/><circle cx="1.35" cy="9.95" r="1.35" fill="#c4c4c4"/><circle cx="5.35" cy="1.35" r="1.35" fill="#c4c4c4"/><circle cx="5.35" cy="5.65" r="1.35" fill="#c4c4c4"/><circle cx="5.35" cy="9.95" r="1.35" fill="#c4c4c4"/></svg><svg class="abs" style="left:26.8px;top:602.9399999999999px;" width="9" height="11" viewBox="0 0 9 11"><path d="M3.1 0.3 L2.5 10.7 M6.6 0.3 L6.0 10.7 M0.3 3.6 H8.6 M0 7.4 H8.3" stroke="#6cbf7c" stroke-width="1.1" fill="none"/></svg><div class="t" style="left:41.5px;top:600.8px;font-size:12px;color:#4a4a4a;">Incident Average Dura<span style="letter-spacing:-1.1px">...</span></div><div class="abs" style="left:4.0px;top:622.3px;width:174.0px;height:21.6px;background:#e2f8e2;border-radius:3px"></div><svg class="abs" style="left:12px;top:627.78px;" width="7" height="11" viewBox="0 0 7 11"><circle cx="1.35" cy="1.35" r="1.35" fill="#c4c4c4"/><circle cx="1.35" cy="5.65" r="1.35" fill="#c4c4c4"/><circle cx="1.35" cy="9.95" r="1.35" fill="#c4c4c4"/><circle cx="5.35" cy="1.35" r="1.35" fill="#c4c4c4"/><circle cx="5.35" cy="5.65" r="1.35" fill="#c4c4c4"/><circle cx="5.35" cy="9.95" r="1.35" fill="#c4c4c4"/></svg><svg class="abs" style="left:26.8px;top:628.0799999999999px;" width="9" height="11" viewBox="0 0 9 11"><path d="M3.1 0.3 L2.5 10.7 M6.6 0.3 L6.0 10.7 M0.3 3.6 H8.6 M0 7.4 H8.3" stroke="#6cbf7c" stroke-width="1.1" fill="none"/></svg><div class="t" style="left:41.5px;top:625.9px;font-size:12px;color:#4a4a4a;">Incident Cost Value</div><div class="abs" style="left:4.0px;top:647.4px;width:174.0px;height:21.6px;background:#e2f8e2;border-radius:3px"></div><svg class="abs" style="left:12px;top:652.9200000000001px;" width="7" height="11" viewBox="0 0 7 11"><circle cx="1.35" cy="1.35" r="1.35" fill="#c4c4c4"/><circle cx="1.35" cy="5.65" r="1.35" fill="#c4c4c4"/><circle cx="1.35" cy="9.95" r="1.35" fill="#c4c4c4"/><circle cx="5.35" cy="1.35" r="1.35" fill="#c4c4c4"/><circle cx="5.35" cy="5.65" r="1.35" fill="#c4c4c4"/><circle cx="5.35" cy="9.95" r="1.35" fill="#c4c4c4"/></svg><svg class="abs" style="left:26.8px;top:653.22px;" width="9" height="11" viewBox="0 0 9 11"><path d="M3.1 0.3 L2.5 10.7 M6.6 0.3 L6.0 10.7 M0.3 3.6 H8.6 M0 7.4 H8.3" stroke="#6cbf7c" stroke-width="1.1" fill="none"/></svg><div class="t" style="left:41.5px;top:651.1px;font-size:12px;color:#4a4a4a;">Incident Count Value</div></div>
<div class="abs" style="left:182.0px;top:442.0px;width:17.0px;height:227.0px;background:#f1f1f1"></div>
<svg class="abs" style="left:186px;top:449px;" width="9" height="5" viewBox="0 0 9 5"><path d="M0 4.5 L4.5 0 L9 4.5 Z" fill="#a3a3a3"/></svg>
<div class="abs" style="left:184.0px;top:459.0px;width:13.0px;height:65.5px;background:#c1c1c1"></div>
<svg class="abs" style="left:186px;top:659px;" width="9" height="5" viewBox="0 0 9 5"><path d="M0 0 L4.5 4.5 L9 0 Z" fill="#505050"/></svg>
<div class="abs" style="left:200.0px;top:50.0px;width:678.0px;height:50.0px;background:#fafafa"></div>
<div class="abs" style="left:200.0px;top:100.0px;width:678.0px;height:1.0px;background:#e6e8eb"></div>
<div class="t" style="left:220.0px;top:68.1px;font-size:12px;color:#4a4a4a;">Category</div>
<div class="abs" style="left:282.8px;top:59.6px;width:246.2px;height:30.4px;border:1px dashed #a9aeb5"></div>
<div class="abs" style="left:288.0px;top:65.0px;width:236.0px;height:19.6px;background:#e8f1fa;border-radius:2px"></div>
<svg class="abs" style="left:297.5px;top:69.2px;" width="7" height="11" viewBox="0 0 7 11"><circle cx="1.35" cy="1.35" r="1.35" fill="#c4c4c4"/><circle cx="1.35" cy="5.65" r="1.35" fill="#c4c4c4"/><circle cx="1.35" cy="9.95" r="1.35" fill="#c4c4c4"/><circle cx="5.35" cy="1.35" r="1.35" fill="#c4c4c4"/><circle cx="5.35" cy="5.65" r="1.35" fill="#c4c4c4"/><circle cx="5.35" cy="9.95" r="1.35" fill="#c4c4c4"/></svg>
<svg class="abs" style="left:311px;top:69.2px;" width="10" height="11" viewBox="0 0 10 11"><rect x="0" y="0.00" width="10" height="1.4" fill="#6e819a"/><rect x="0" y="2.95" width="7" height="1.4" fill="#6e819a"/><rect x="0" y="5.90" width="10" height="1.4" fill="#6e819a"/><rect x="0" y="8.85" width="7" height="1.4" fill="#6e819a"/></svg>
<div class="t" style="left:326.5px;top:68.1px;font-size:12px;color:#4a4a4a;">Incident Category Label</div>
<svg class="abs" style="left:511px;top:67px;" width="4" height="14" viewBox="0 0 4 14"><circle cx="2" cy="2.5" r="1.2" fill="#6e819a"/><circle cx="2" cy="6.5" r="1.2" fill="#6e819a"/><circle cx="2" cy="10.5" r="1.2" fill="#6e819a"/></svg>
<div class="t" style="left:549.0px;top:68.1px;font-size:12px;color:#4a4a4a;">Values</div>
<div class="abs" style="left:599.8px;top:59.6px;width:258.2px;height:30.4px;border:1px dashed #a9aeb5"></div>
<div class="abs" style="left:605.0px;top:65.0px;width:248.0px;height:19.6px;background:#e1f8e1;border-radius:2px"></div>
<svg class="abs" style="left:614px;top:69.2px;" width="7" height="11" viewBox="0 0 7 11"><circle cx="1.35" cy="1.35" r="1.35" fill="#c4c4c4"/><circle cx="1.35" cy="5.65" r="1.35" fill="#c4c4c4"/><circle cx="1.35" cy="9.95" r="1.35" fill="#c4c4c4"/><circle cx="5.35" cy="1.35" r="1.35" fill="#c4c4c4"/><circle cx="5.35" cy="5.65" r="1.35" fill="#c4c4c4"/><circle cx="5.35" cy="9.95" r="1.35" fill="#c4c4c4"/></svg>
<svg class="abs" style="left:629px;top:69.3px;" width="9" height="11" viewBox="0 0 9 11"><path d="M3.1 0.3 L2.5 10.7 M6.6 0.3 L6.0 10.7 M0.3 3.6 H8.6 M0 7.4 H8.3" stroke="#6cbf7c" stroke-width="1.1" fill="none"/></svg>
<div class="t" style="left:643.5px;top:68.1px;font-size:12px;color:#4a4a4a;">Incident Type id</div>
<div class="t" style="left:781.5px;top:68.1px;font-size:12px;color:#6fc181;">(SUM)</div>
<svg class="abs" style="left:823px;top:68px;" width="8" height="13" viewBox="0 0 8 13"><path d="M4 1 V11 M1.2 8.2 L4 11.2 L6.8 8.2" fill="none" stroke="#3574d0" stroke-width="1.3"/></svg>
<svg class="abs" style="left:840px;top:67px;" width="4" height="14" viewBox="0 0 4 14"><circle cx="2" cy="2.5" r="1.2" fill="#6cbf7c"/><circle cx="2" cy="6.5" r="1.2" fill="#6cbf7c"/><circle cx="2" cy="10.5" r="1.2" fill="#6cbf7c"/></svg>
<div class="t" style="left:220.5px;top:119.1px;font-size:15.5px;color:#4a4a4a;letter-spacing:0.17px">Number of Incidents Per Category</div>
<div class="t" style="left:220.0px;top:138.7px;font-size:12px;color:#8a8a8a;">Add Description</div>
<div class="abs" style="left:200.0px;top:171.0px;width:678.0px;height:1.0px;background:#e6e8eb"></div>
<div class="abs" style="left:210.0px;top:185.0px;width:10.0px;height:10.0px;background:#587591"></div>
<div class="t" style="left:224.8px;top:183.5px;font-size:12px;color:#555;">Incident Type id</div>
<div class="abs" style="left:539.0px;top:185.0px;width:10.0px;height:10.0px;background:#1f77b4"></div>
<div class="t" style="left:554.0px;top:183.5px;font-size:12px;color:#555;">0</div>
<svg class="abs" style="left:0;top:0" width="878" height="669"><line x1="252" y1="471.8" x2="865" y2="471.8" stroke="#e7e7e7" stroke-width="1" stroke-dasharray="5,5" stroke-dashoffset="2"/><line x1="252" y1="450.8" x2="865" y2="450.8" stroke="#e7e7e7" stroke-width="1" stroke-dasharray="5,5" stroke-dashoffset="2"/><line x1="252" y1="429.7" x2="865" y2="429.7" stroke="#e7e7e7" stroke-width="1" stroke-dasharray="5,5" stroke-dashoffset="2"/><line x1="252" y1="408.7" x2="865" y2="408.7" stroke="#e7e7e7" stroke-width="1" stroke-dasharray="5,5" stroke-dashoffset="2"/><line x1="252" y1="387.6" x2="865" y2="387.6" stroke="#e7e7e7" stroke-width="1" stroke-dasharray="5,5" stroke-dashoffset="2"/><line x1="252" y1="366.5" x2="865" y2="366.5" stroke="#e7e7e7" stroke-width="1" stroke-dasharray="5,5" stroke-dashoffset="2"/><line x1="252" y1="345.5" x2="865" y2="345.5" stroke="#e7e7e7" stroke-width="1" stroke-dasharray="5,5" stroke-dashoffset="2"/><line x1="252" y1="324.4" x2="865" y2="324.4" stroke="#e7e7e7" stroke-width="1" stroke-dasharray="5,5" stroke-dashoffset="2"/><line x1="252" y1="303.4" x2="865" y2="303.4" stroke="#e7e7e7" stroke-width="1" stroke-dasharray="5,5" stroke-dashoffset="2"/><line x1="252" y1="282.3" x2="865" y2="282.3" stroke="#e7e7e7" stroke-width="1" stroke-dasharray="5,5" stroke-dashoffset="2"/><line x1="252" y1="261.2" x2="865" y2="261.2" stroke="#e7e7e7" stroke-width="1" stroke-dasharray="5,5" stroke-dashoffset="2"/><line x1="252" y1="240.2" x2="865" y2="240.2" stroke="#e7e7e7" stroke-width="1" stroke-dasharray="5,5" stroke-dashoffset="2"/><line x1="252" y1="219.1" x2="865" y2="219.1" stroke="#e7e7e7" stroke-width="1" stroke-dasharray="5,5" stroke-dashoffset="2"/></svg>
<div class="abs" style="left:254.2px;top:214.2px;width:79.5px;height:277.4px;background:#587591"></div>
<div class="t" style="left:253.9px;top:203.0px;width:80px;text-align:center;font-size:10px;line-height:11px;color:#46677f">1,317</div>
<div class="abs" style="left:293.4px;top:497.9px;width:1.0px;height:3.0px;background:#e3e3e3"></div>
<div class="t" style="left:87.9px;top:499.7px;width:200px;text-align:right;font-size:11px;line-height:12px;color:#555;transform-origin:100% 0;transform:rotate(-45deg)">General Security</div>
<div class="abs" style="left:342.5px;top:367.3px;width:79.5px;height:124.3px;background:#587591"></div>
<div class="t" style="left:342.2px;top:356.1px;width:80px;text-align:center;font-size:10px;line-height:11px;color:#46677f">590</div>
<div class="abs" style="left:381.8px;top:497.9px;width:1.0px;height:3.0px;background:#e3e3e3"></div>
<div class="t" style="left:176.2px;top:499.7px;width:200px;text-align:right;font-size:11px;line-height:12px;color:#555;transform-origin:100% 0;transform:rotate(-45deg)">Property Incident</div>
<div class="abs" style="left:430.8px;top:378.7px;width:79.5px;height:112.9px;background:#587591"></div>
<div class="t" style="left:430.5px;top:367.5px;width:80px;text-align:center;font-size:10px;line-height:11px;color:#46677f">536</div>
<div class="abs" style="left:470.0px;top:497.9px;width:1.0px;height:3.0px;background:#e3e3e3"></div>
<div class="t" style="left:264.5px;top:499.7px;width:200px;text-align:right;font-size:11px;line-height:12px;color:#555;transform-origin:100% 0;transform:rotate(-45deg)">Person Incident</div>
<div class="abs" style="left:519.1px;top:389.2px;width:79.5px;height:102.4px;background:#587591"></div>
<div class="t" style="left:518.8px;top:378.0px;width:80px;text-align:center;font-size:10px;line-height:11px;color:#46677f">486</div>
<div class="abs" style="left:558.3px;top:497.9px;width:1.0px;height:3.0px;background:#e3e3e3"></div>
<div class="t" style="left:352.8px;top:499.7px;width:200px;text-align:right;font-size:11px;line-height:12px;color:#555;transform-origin:100% 0;transform:rotate(-45deg)">Information Protection</div>
<div class="abs" style="left:607.4px;top:424.2px;width:79.5px;height:67.4px;background:#587591"></div>
<div class="t" style="left:607.1px;top:413.0px;width:80px;text-align:center;font-size:10px;line-height:11px;color:#46677f">320</div>
<div class="abs" style="left:646.6px;top:497.9px;width:1.0px;height:3.0px;background:#e3e3e3"></div>
<div class="t" style="left:441.1px;top:499.7px;width:200px;text-align:right;font-size:11px;line-height:12px;color:#555;transform-origin:100% 0;transform:rotate(-45deg)">Executive Protection</div>
<div class="abs" style="left:695.7px;top:480.2px;width:79.5px;height:11.4px;background:#587591"></div>
<div class="t" style="left:695.5px;top:469.0px;width:80px;text-align:center;font-size:10px;line-height:11px;color:#46677f">54</div>
<div class="abs" style="left:735.0px;top:497.9px;width:1.0px;height:3.0px;background:#e3e3e3"></div>
<div class="t" style="left:529.5px;top:499.7px;width:200px;text-align:right;font-size:11px;line-height:12px;color:#555;transform-origin:100% 0;transform:rotate(-45deg)">Human Resources</div>
<div class="abs" style="left:784.0px;top:480.9px;width:79.5px;height:10.7px;background:#587591"></div>
<div class="t" style="left:783.8px;top:469.7px;width:80px;text-align:center;font-size:10px;line-height:11px;color:#46677f">51</div>
<div class="abs" style="left:823.2px;top:497.9px;width:1.0px;height:3.0px;background:#e3e3e3"></div>
<div class="t" style="left:617.8px;top:499.7px;width:200px;text-align:right;font-size:11px;line-height:12px;color:#555;transform-origin:100% 0;transform:rotate(-45deg)">Emergency</div>
<div class="abs" style="left:249.0px;top:215.0px;width:2.0px;height:283.0px;background:#e0e0e0"></div>
<div class="abs" style="left:244.0px;top:215.0px;width:5.0px;height:1.5px;background:#e0e0e0"></div>
<div class="abs" style="left:244.0px;top:492.1px;width:5.0px;height:1.6px;background:#dcdcdc"></div>
<div class="t" style="left:196.5px;top:490.7px;width:43px;text-align:right;font-size:11px;line-height:12px;color:#555;transform-origin:100% 50%;transform:rotate(-45deg)">0</div>
<div class="abs" style="left:244.0px;top:450.0px;width:5.0px;height:1.6px;background:#dcdcdc"></div>
<div class="t" style="left:196.5px;top:448.6px;width:43px;text-align:right;font-size:11px;line-height:12px;color:#555;transform-origin:100% 50%;transform:rotate(-45deg)">200</div>
<div class="abs" style="left:244.0px;top:407.9px;width:5.0px;height:1.6px;background:#dcdcdc"></div>
<div class="t" style="left:196.5px;top:406.5px;width:43px;text-align:right;font-size:11px;line-height:12px;color:#555;transform-origin:100% 50%;transform:rotate(-45deg)">400</div>
<div class="abs" style="left:244.0px;top:365.7px;width:5.0px;height:1.6px;background:#dcdcdc"></div>
<div class="t" style="left:196.5px;top:364.3px;width:43px;text-align:right;font-size:11px;line-height:12px;color:#555;transform-origin:100% 50%;transform:rotate(-45deg)">600</div>
<div class="abs" style="left:244.0px;top:323.6px;width:5.0px;height:1.6px;background:#dcdcdc"></div>
<div class="t" style="left:196.5px;top:322.2px;width:43px;text-align:right;font-size:11px;line-height:12px;color:#555;transform-origin:100% 50%;transform:rotate(-45deg)">800</div>
<div class="abs" style="left:244.0px;top:281.5px;width:5.0px;height:1.6px;background:#dcdcdc"></div>
<div class="t" style="left:196.5px;top:280.1px;width:43px;text-align:right;font-size:11px;line-height:12px;color:#555;transform-origin:100% 50%;transform:rotate(-45deg)">1,000</div>
<div class="abs" style="left:244.0px;top:239.4px;width:5.0px;height:1.6px;background:#dcdcdc"></div>
<div class="t" style="left:196.5px;top:238.0px;width:43px;text-align:right;font-size:11px;line-height:12px;color:#555;transform-origin:100% 50%;transform:rotate(-45deg)">1,200</div>
<div class="abs" style="left:251.0px;top:492.9px;width:617.0px;height:1.0px;background:#e3e3e3"></div>
<div class="abs" style="left:249.5px;top:495.5px;width:618.0px;height:2.1px;background:#2278b5"></div>
<div class="t" style="left:250.5px;top:480.8px;font-size:13px;color:#16324f;font-weight:bold;-webkit-text-stroke:0.6px #2a6da8">0</div>
<div class="abs" style="left:200.0px;top:634.0px;width:678.0px;height:1.0px;background:#e6e8eb"></div>
<svg class="abs" style="left:219.5px;top:644.5px;" width="13" height="13" viewBox="0 0 13 13"><circle cx="6.5" cy="6.5" r="6.1" fill="#4fa6de"/><rect x="6" y="5.3" width="1" height="3.6" fill="#b5dbf3"/><rect x="6" y="3.6" width="1" height="1" fill="#b5dbf3"/></svg>
<div class="t" style="left:237.5px;top:644.8px;font-size:12px;color:#4a4a4a;letter-spacing:0.03px">Chart shows a maximum number of data points by default. To see more, go to <i>General</i> chart options and increase <span style="letter-spacing:-1.1px">...</span></div>
<div class="abs" style="left:878.0px;top:50.0px;width:1.0px;height:619.0px;background:#e6e8eb"></div>
<div class="abs" style="left:879.0px;top:50.0px;width:200.0px;height:30.0px;background:#f3f4f6"></div>
<div class="abs" style="left:879.0px;top:80.0px;width:200.0px;height:1.0px;background:#e9ebee"></div>
<div class="t" style="left:889.5px;top:57.6px;font-size:12px;color:#4a4a4a;">Charts</div>
<svg class="abs" style="left:1056px;top:60px;" width="12" height="8" viewBox="0 0 12 8"><path d="M1 1.2 L5.8 5.6 L10.6 1.2" fill="none" stroke="#c6c6c6" stroke-width="2.1"/></svg>
<div class="abs" style="left:879px;top:81px;width:183px;height:195px;overflow:hidden;background:#fff"><div class="abs" style="left:-879px;top:-81px;width:1079px;height:669px"><div class="abs" style="left:885.0px;top:87.0px;width:53.7px;height:39.5px;border:1.5px solid #2566c8;background:#fff"></div><div class="abs" style="left:943.4px;top:87.0px;width:53.7px;height:39.5px;border:1px solid #e8e9eb;background:#fff"></div><div class="abs" style="left:1002.3px;top:87.0px;width:53.7px;height:39.5px;border:1px solid #e8e9eb;background:#fff"></div><div class="abs" style="left:885.0px;top:131.0px;width:53.7px;height:39.5px;border:1px solid #e8e9eb;background:#fff"></div><div class="abs" style="left:943.4px;top:131.0px;width:53.7px;height:39.5px;border:1px solid #e8e9eb;background:#fff"></div><div class="abs" style="left:1002.3px;top:131.0px;width:53.7px;height:39.5px;border:1px solid #e8e9eb;background:#fff"></div><div class="abs" style="left:885.0px;top:175.5px;width:53.7px;height:39.5px;border:1px solid #e8e9eb;background:#fff"></div><div class="abs" style="left:943.4px;top:175.5px;width:53.7px;height:39.5px;border:1px solid #e8e9eb;background:#fff"></div><div class="abs" style="left:1002.3px;top:175.5px;width:53.7px;height:39.5px;border:1px solid #e8e9eb;background:#fff"></div><div class="abs" style="left:885.0px;top:219.4px;width:53.7px;height:39.5px;border:1px solid #e8e9eb;background:#fff"></div><div class="abs" style="left:943.4px;top:219.4px;width:53.7px;height:39.5px;border:1px solid #e8e9eb;background:#fff"></div><div class="abs" style="left:1002.3px;top:219.4px;width:53.7px;height:39.5px;border:1px solid #e8e9eb;background:#fff"></div><div class="abs" style="left:885.0px;top:263.6px;width:53.7px;height:39.5px;border:1px solid #e8e9eb;background:#fff"></div><div class="abs" style="left:943.4px;top:263.6px;width:53.7px;height:39.5px;border:1px solid #e8e9eb;background:#fff"></div><div class="abs" style="left:1002.3px;top:263.6px;width:53.7px;height:39.5px;border:1px solid #e8e9eb;background:#fff"></div><svg class="abs" style="left:0;top:0" width="1079" height="669"><rect x="905.1" y="106.3" width="2" height="11.1" fill="#6aaee0"/><rect x="909.1" y="97.5" width="2" height="19.9" fill="#6aaee0"/><rect x="912.9" y="111.9" width="2" height="5.5" fill="#6aaee0"/><rect x="916.8" y="98.3" width="2" height="19.1" fill="#6aaee0"/><polyline points="952.5,109.3 964.0,113.4 976.2,100.4 988.5,105.1" fill="none" stroke="#7d93aa" stroke-width="1"/><circle cx="952.5" cy="109.3" r="1.6" fill="#fff" stroke="#7d93aa" stroke-width="0.9"/><circle cx="964.0" cy="113.4" r="1.6" fill="#fff" stroke="#7d93aa" stroke-width="0.9"/><circle cx="976.2" cy="100.4" r="1.6" fill="#fff" stroke="#7d93aa" stroke-width="0.9"/><circle cx="988.5" cy="105.1" r="1.6" fill="#fff" stroke="#7d93aa" stroke-width="0.9"/><path d="M1014.5 97.2 V116.9 H1043.7" fill="none" stroke="#8fa2b6" stroke-width="1.3"/><circle cx="1018.6" cy="111.4" r="1.1" fill="none" stroke="#8fa2b6" stroke-width="0.8"/><circle cx="1022.5" cy="107.5" r="1.1" fill="none" stroke="#8fa2b6" stroke-width="0.8"/><circle cx="1027.5" cy="108.4" r="1.1" fill="none" stroke="#8fa2b6" stroke-width="0.8"/><circle cx="1030.6" cy="104.2" r="1.1" fill="none" stroke="#8fa2b6" stroke-width="0.8"/><circle cx="1034.5" cy="101.5" r="1.1" fill="none" stroke="#8fa2b6" stroke-width="0.8"/><circle cx="1038.5" cy="105.6" r="1.1" fill="none" stroke="#8fa2b6" stroke-width="0.8"/><rect x="905.9" y="141" width="2.6" height="20" fill="#dfe5ec"/><rect x="905.9" y="148" width="2.6" height="13" fill="#a9b8c7"/><rect x="905.9" y="155" width="2.6" height="6" fill="#7b8fa5"/><rect x="910.4" y="141" width="2.6" height="20" fill="#dfe5ec"/><rect x="910.4" y="148" width="2.6" height="13" fill="#a9b8c7"/><rect x="910.4" y="155" width="2.6" height="6" fill="#7b8fa5"/><rect x="914.9" y="141" width="2.6" height="20" fill="#dfe5ec"/><rect x="914.9" y="148" width="2.6" height="13" fill="#a9b8c7"/><rect x="914.9" y="155" width="2.6" height="6" fill="#7b8fa5"/><path d="M956.5 141.4 V161.1 H985.3" fill="none" stroke="#8fa2b6" stroke-width="1.3"/><polyline points="956.5,155 963,150 969,155 983,144" fill="none" stroke="#8fa2b6" stroke-width="1"/><polyline points="956.5,161 971,147 983,157" fill="none" stroke="#aebccb" stroke-width="1"/><path d="M1014.5 141.4 V161.1 H1043.7" fill="none" stroke="#8fa2b6" stroke-width="1.3"/><circle cx="1021.5" cy="154.5" r="1.1" fill="none" stroke="#9fb0c2" stroke-width="0.8"/><circle cx="1021.5" cy="150.5" r="1.1" fill="none" stroke="#9fb0c2" stroke-width="0.8"/><circle cx="1026.5" cy="154.5" r="1.1" fill="none" stroke="#9fb0c2" stroke-width="0.8"/><circle cx="1026.5" cy="150.5" r="1.1" fill="none" stroke="#9fb0c2" stroke-width="0.8"/><circle cx="1026.5" cy="146.5" r="1.1" fill="none" stroke="#9fb0c2" stroke-width="0.8"/><circle cx="1026.5" cy="146.5" r="1.1" fill="none" stroke="#9fb0c2" stroke-width="0.8"/><circle cx="1031.5" cy="154.5" r="1.1" fill="none" stroke="#9fb0c2" stroke-width="0.8"/><circle cx="1031.5" cy="150.5" r="1.1" fill="none" stroke="#9fb0c2" stroke-width="0.8"/><circle cx="1036.5" cy="154.5" r="1.1" fill="none" stroke="#9fb0c2" stroke-width="0.8"/><circle cx="1036.5" cy="150.5" r="1.1" fill="none" stroke="#9fb0c2" stroke-width="0.8"/><circle cx="1036.5" cy="146.5" r="1.1" fill="none" stroke="#9fb0c2" stroke-width="0.8"/><circle cx="1036.5" cy="146.5" r="1.1" fill="none" stroke="#9fb0c2" stroke-width="0.8"/><rect x="904.5" y="190" width="2.5" height="15" fill="#a9b8c7"/><rect x="909.6" y="186" width="2.5" height="19" fill="#a9b8c7"/><rect x="913.9" y="194" width="2.5" height="11" fill="#a9b8c7"/><polyline points="901,198.5 906,197.5 912,196.5 916,198.5 922.7,195.4" fill="none" stroke="#7b8fa5" stroke-width="1"/><rect x="963.9" y="185" width="2.8" height="20.7" fill="#c7d2dc"/><rect x="963.9" y="197" width="2.8" height="8.7" fill="#7b8fa5"/><rect x="968.5" y="185" width="2.8" height="20.7" fill="#c7d2dc"/><rect x="968.5" y="197" width="2.8" height="8.7" fill="#7b8fa5"/><rect x="972.9" y="185" width="2.8" height="20.7" fill="#c7d2dc"/><rect x="972.9" y="197" width="2.8" height="8.7" fill="#7b8fa5"/><polyline points="960,196 967,194.5 973,196 981,193.5" fill="none" stroke="#7b8fa5" stroke-width="1"/><path d="M1018.9000000000001 186.8 H1037.4 L1035.5 191 H1020.8 Z" fill="#7b8fa5"/><path d="M1021.3 192 H1035 L1033.7 195 H1022.5999999999999 Z" fill="#9aabbd"/><path d="M1023.0999999999999 196 H1033.2 L1031.8 199.6 H1024.5 Z" fill="#b4c2cf"/><rect x="1027.5" y="200.5" width="1.4" height="3.6" fill="#9aabbd"/><circle cx="911.8" cy="238.8" r="9" fill="#a3b4c5"/><path d="M911.8 238.8 V229.8 A9 9 0 0 0 904.87 244.56 Z" fill="#7f94aa"/><path d="M911.8 238.8 H920.8 A9 9 0 0 0 911.8 229.8 Z" fill="#bccad7"/><path d="M911.8 238.8 V229.8 M911.8 238.8 H920.8 M911.8 238.8 L904.87 244.56" stroke="#fff" stroke-width="0.9"/><path d="M963.2 231 V246" stroke="#b4c2cf" stroke-width="1"/><path d="M962.0 231.5 H964.4000000000001 M962.0 245.5 H964.4000000000001" stroke="#9aabbd" stroke-width="1"/><circle cx="963.2" cy="238.5" r="1.5" fill="#7b8fa5"/><path d="M970 228 V249" stroke="#b4c2cf" stroke-width="1"/><path d="M968.8 228.5 H971.2 M968.8 248.5 H971.2" stroke="#9aabbd" stroke-width="1"/><circle cx="970" cy="238.5" r="1.5" fill="#7b8fa5"/><path d="M977 231 V246" stroke="#b4c2cf" stroke-width="1"/><path d="M975.8 231.5 H978.2 M975.8 245.5 H978.2" stroke="#9aabbd" stroke-width="1"/><circle cx="977" cy="238.5" r="1.5" fill="#7b8fa5"/><rect x="1016.9000000000001" y="231.7" width="23.6" height="3" fill="#7f94aa"/><rect x="1016.9000000000001" y="236.7" width="23.6" height="1" fill="#b4c2cf"/><rect x="1016.9000000000001" y="239.89999999999998" width="23.6" height="1" fill="#b4c2cf"/><rect x="1016.9000000000001" y="242.7" width="23.6" height="1" fill="#b4c2cf"/><rect x="1022.7" y="234.7" width="1" height="9.5" fill="#b4c2cf"/><rect x="1028.2" y="234.7" width="1" height="9.5" fill="#b4c2cf"/><rect x="1034.2" y="234.7" width="1" height="9.5" fill="#b4c2cf"/><rect x="901" y="274.3" width="22" height="1.7" fill="#7f94aa"/></svg></div></div>
<div class="abs" style="left:1062.0px;top:81.0px;width:17.0px;height:195.0px;background:#f1f1f1"></div>
<svg class="abs" style="left:1066px;top:88px;" width="9" height="5" viewBox="0 0 9 5"><path d="M0 4.5 L4.5 0 L9 4.5 Z" fill="#a3a3a3"/></svg>
<div class="abs" style="left:1064.0px;top:98.0px;width:13.0px;height:98.5px;background:#c1c1c1"></div>
<svg class="abs" style="left:1066px;top:264px;" width="9" height="5" viewBox="0 0 9 5"><path d="M0 0 L4.5 4.5 L9 0 Z" fill="#505050"/></svg>
<div class="abs" style="left:879.0px;top:276.0px;width:200.0px;height:124.0px;background:#f3f4f6"></div>
<div class="abs" style="left:879.0px;top:276.0px;width:200.0px;height:1.0px;background:#e6e8eb"></div>
<div class="t" style="left:889.5px;top:285.0px;font-size:12px;color:#4a4a4a;">General</div>
<svg class="abs" style="left:1057.8px;top:286px;" width="8" height="12" viewBox="0 0 8 12"><path d="M1.3 1 L5.8 5.6 L1.3 10.2" fill="none" stroke="#c6c6c6" stroke-width="1.9"/></svg>
<div class="abs" style="left:879.0px;top:307.0px;width:200.0px;height:1.0px;background:#e6e8eb"></div>
<div class="t" style="left:889.5px;top:316.0px;font-size:12px;color:#4a4a4a;">Styles</div>
<svg class="abs" style="left:1057.8px;top:317px;" width="8" height="12" viewBox="0 0 8 12"><path d="M1.3 1 L5.8 5.6 L1.3 10.2" fill="none" stroke="#c6c6c6" stroke-width="1.9"/></svg>
<div class="abs" style="left:879.0px;top:338.0px;width:200.0px;height:1.0px;background:#e6e8eb"></div>
<div class="t" style="left:889.5px;top:347.0px;font-size:12px;color:#4a4a4a;">Sorting</div>
<svg class="abs" style="left:1057.8px;top:348px;" width="8" height="12" viewBox="0 0 8 12"><path d="M1.3 1 L5.8 5.6 L1.3 10.2" fill="none" stroke="#c6c6c6" stroke-width="1.9"/></svg>
<div class="abs" style="left:879.0px;top:369.0px;width:200.0px;height:1.0px;background:#e6e8eb"></div>
<div class="t" style="left:889.5px;top:378.0px;font-size:12px;color:#4a4a4a;">Layers</div>
<svg class="abs" style="left:1056px;top:381px;" width="12" height="8" viewBox="0 0 12 8"><path d="M1 1.3 L5.6 5.8 L10.2 1.3" fill="none" stroke="#c6c6c6" stroke-width="1.9"/></svg>
<div class="abs" style="left:879.0px;top:400.0px;width:200.0px;height:1.0px;background:#e6e8eb"></div>
<div class="abs" style="left:879.0px;top:401.0px;width:200.0px;height:33.0px;background:#fff"></div>
<div class="t" style="left:894.5px;top:410.4px;font-size:12.5px;color:#4a4a4a;">Trend Line</div>
<svg class="abs" style="left:1055.5px;top:411px;" width="8" height="12" viewBox="0 0 8 12"><path d="M1.3 1 L5.8 5.6 L1.3 10.2" fill="none" stroke="#2566c8" stroke-width="2"/></svg>
<div class="abs" style="left:879.0px;top:434.0px;width:200.0px;height:1.0px;background:#e6e8eb"></div>
<div class="abs" style="left:879.0px;top:435.0px;width:200.0px;height:33.0px;background:#fff"></div>
<div class="t" style="left:894.5px;top:444.9px;font-size:12.5px;color:#4a4a4a;">Reference Line</div>
<svg class="abs" style="left:1054px;top:447.5px;" width="12" height="8" viewBox="0 0 12 8"><path d="M1 1.3 L5.6 5.8 L10.2 1.3" fill="none" stroke="#2566c8" stroke-width="2"/></svg>
<div class="abs" style="left:879.0px;top:468.0px;width:200.0px;height:1.0px;background:#e6e8eb"></div>
<div class="abs" style="left:879.0px;top:469.0px;width:200.0px;height:133.0px;background:#f7f8fa"></div>
<div class="abs" style="left:879.0px;top:540.0px;width:200.0px;height:62.0px;background:#f3f4f6"></div>
<div class="t" style="left:894.5px;top:478.2px;font-size:12px;color:#2f6fd0;">+ Add Reference Line</div>
<div class="t" style="left:889.5px;top:546.8px;font-size:12px;color:#4a4a4a;">Format</div>
<svg class="abs" style="left:1057.8px;top:548px;" width="8" height="12" viewBox="0 0 8 12"><path d="M1.3 1 L5.8 5.6 L1.3 10.2" fill="none" stroke="#c6c6c6" stroke-width="1.9"/></svg>
<div class="abs" style="left:879.0px;top:569.8px;width:200.0px;height:1.0px;background:#e6e8eb"></div>
<div class="t" style="left:889.5px;top:578.5px;font-size:12px;color:#4a4a4a;">Filters</div>
<svg class="abs" style="left:1057.8px;top:580px;" width="8" height="12" viewBox="0 0 8 12"><path d="M1.3 1 L5.8 5.6 L1.3 10.2" fill="none" stroke="#c6c6c6" stroke-width="1.9"/></svg>
<div class="abs" style="left:879.0px;top:600.8px;width:200.0px;height:1.0px;background:#e6e8eb"></div>
</div>
<div class="abs" style="left:895.4px;top:523.1px;width:210.2px;height:39.0px;border:3.9px solid #f4424a;background:#f7f8fa;box-shadow:0px 3px 7px rgba(0,0,0,0.5)"></div>
<svg class="abs" style="left:915px;top:535px;" width="9" height="14" viewBox="0 0 9 14"><circle cx="1.6" cy="1.6" r="1.55" fill="#c2c2c2"/><circle cx="1.6" cy="6.6" r="1.55" fill="#c2c2c2"/><circle cx="1.6" cy="11.6" r="1.55" fill="#c2c2c2"/><circle cx="7.199999999999999" cy="1.6" r="1.55" fill="#c2c2c2"/><circle cx="7.199999999999999" cy="6.6" r="1.55" fill="#c2c2c2"/><circle cx="7.199999999999999" cy="11.6" r="1.55" fill="#c2c2c2"/></svg>
<div class="t" style="left:932.4px;top:535.0px;font-size:13px;color:#4d4d4d;">Reference Line 1</div>
<svg class="abs" style="left:1081.5px;top:537px;" width="8" height="12" viewBox="0 0 8 12"><path d="M1.3 1 L5.8 5.6 L1.3 10.2" fill="none" stroke="#2566c8" stroke-width="2"/></svg>
</body></html>
